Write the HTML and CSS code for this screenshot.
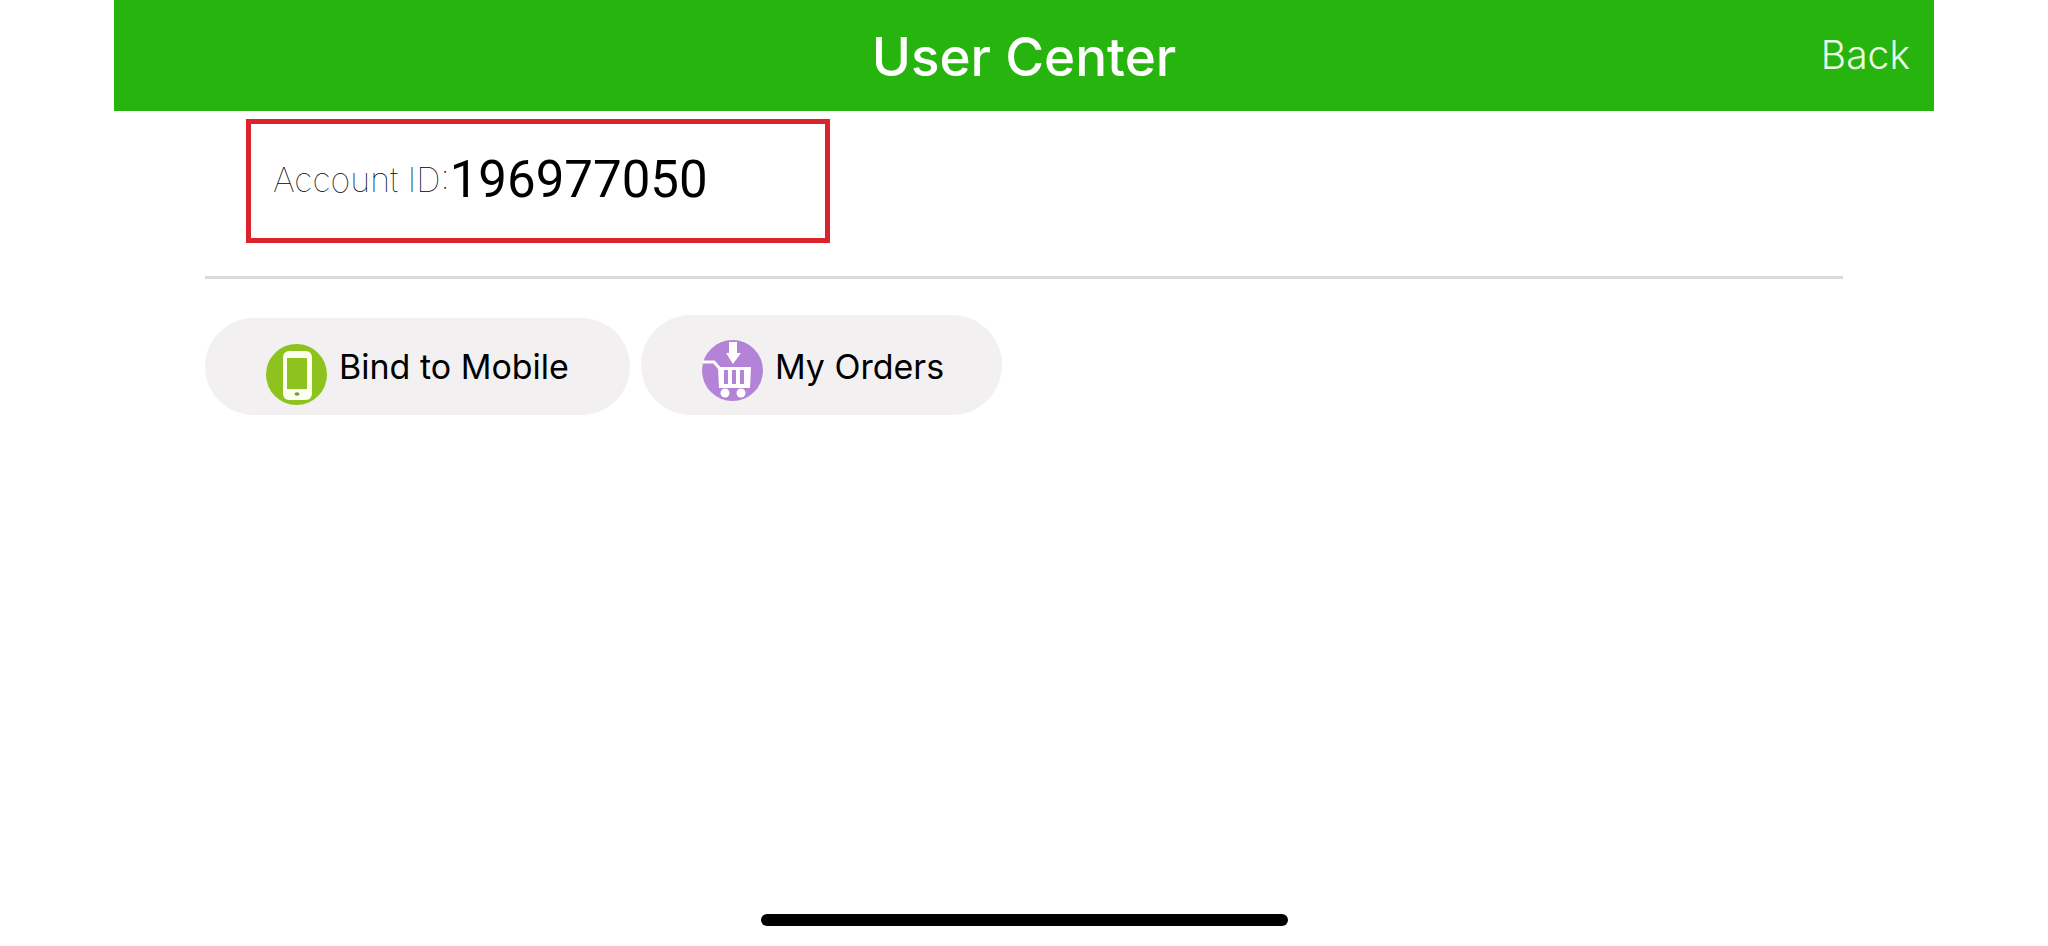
FILE: index.html
```html
<!DOCTYPE html>
<html lang="en">
<head>
    <meta charset="UTF-8">
    <meta name="viewport" content="width=device-width, initial-scale=1.0">
    <title>User Center</title>
    <link rel="stylesheet" href="styles.css">
</head>
<body>

<div class="page">
    <header class="header">
        <h1>User Center</h1>
        <a href="#" class="back">Back</a>
    </header>

    <main class="content">
        <div class="account-section">
            <div class="account-box">
                <span class="account-label">Account ID:</span>
                <span class="account-id">196977050</span>
            </div>
        </div>

        <div class="actions">
            <button type="button" class="action-button bind-button">
                <svg class="icon" viewBox="0 0 61 61" aria-hidden="true">
                    <circle cx="30.5" cy="30.5" r="30.5" fill="#8dc21f"/>
                    <rect x="17" y="7" width="29" height="49" rx="6" fill="#fbfff0"/>
                    <rect x="21" y="14" width="20" height="31" fill="#8dc21f"/>
                    <ellipse cx="31" cy="50" rx="2.5" ry="1.7" fill="#7a9a3a"/>
                </svg>
                <span>Bind to Mobile</span>
            </button>
            <button type="button" class="action-button orders-button">
                <svg class="icon" viewBox="0 0 61 61" aria-hidden="true">
                    <circle cx="30.5" cy="30.5" r="30.5" fill="#b283d6"/>
                    <path d="M27 2h8v11h4l-8 11-7-11h3z" fill="#fff"/>
                    <path d="M1 22h11l6 7" fill="none" stroke="#fff" stroke-width="3"/>
                    <path d="M16 27h33l-1 21H17z" fill="#fff"/>
                    <path d="M24 30v14M32 30v14M40 30v14" stroke="#b283d6" stroke-width="4"/>
                    <circle cx="23" cy="53" r="4.5" fill="#fff"/>
                    <circle cx="39" cy="53" r="4.5" fill="#fff"/>
                </svg>
                <span>My Orders</span>
            </button>
        </div>
    </main>

    <div class="home-indicator"></div>
</div>

</body>
</html>
```
FILE: styles.css
```css
body {
    margin: 0;
    background-color: #fff;
    color: #000;
    font-family: Inter, "Liberation Sans", sans-serif;
}
.page {
    display: flex;
    flex-direction: column;
    min-height: 100vh;
    box-sizing: border-box;
    padding: 0 114px 20px;
}
.header {
    display: grid;
    grid-template-columns: 1fr auto 1fr;
    align-items: start;
    height: 111px;
    padding: 0 24px;
    background-color: #28b40f;
    color: #fff;
}
.header h1 {
    grid-column: 2;
    margin: 0;
    font-size: 53px;
    font-weight: 500;
    line-height: 114px;
}
.back {
    justify-self: end;
    color: #e9ffe2;
    font-size: 39px;
    font-weight: 300;
    line-height: 110px;
    text-decoration: none;
}
.content {
    flex: 1;
    padding: 8px 91px 0;
}
.account-section {
    padding: 0 41px 33px;
    border-bottom: 3px solid #dcdcdc;
}
.account-box {
    display: flex;
    align-items: center;
    max-width: 584px;
    box-sizing: border-box;
    padding: 26px 22px 28px;
    border: 5px solid #da242b;
    line-height: 60px;
}
.account-label {
    font-size: 34px;
    font-weight: 100;
}
.account-id {
    font-family: Roboto, Arial, sans-serif;
    font-size: 51px;
}
.actions {
    display: flex;
    align-items: flex-end;
    gap: 11px;
    padding-top: 36px;
}
.action-button {
    display: flex;
    align-items: flex-start;
    gap: 12px;
    height: 100px;
    padding: 25px 61px 0;
    border: none;
    border-radius: 50px;
    background-color: #f3f0f1;
    color: #000;
    font-family: inherit;
    font-size: 34px;
    line-height: 54px;
    cursor: pointer;
}
.bind-button {
    height: 97px;
    padding-top: 26px;
    line-height: 46px;
}
.orders-button {
    padding-right: 58px;
}
.icon {
    width: 61px;
    height: 61px;
}
.home-indicator {
    align-self: center;
    width: 527px;
    height: 12px;
    border-radius: 6px;
    background-color: #000;
}
```
